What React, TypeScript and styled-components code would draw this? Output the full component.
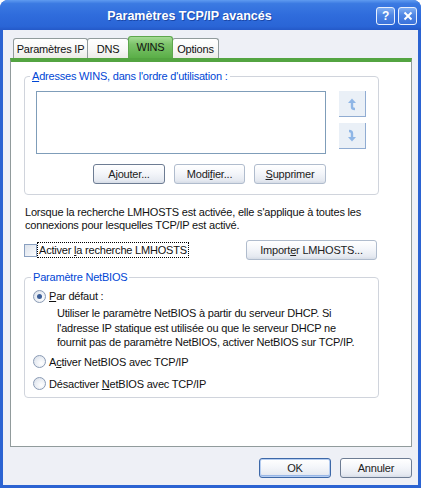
import React from "react";
import styled, { createGlobalStyle, css } from "styled-components";

const Global = createGlobalStyle`
  html, body { margin: 0; padding: 0; background: #ffffff; }
  body { font-family: "Liberation Sans", Arial, sans-serif; font-size: 11px; letter-spacing: -0.2px; color: #111; }
  * { box-sizing: border-box; }
`;

const Window = styled.div`
  width: 421px;
  height: 488px;
  display: flex;
  flex-direction: column;
  background: #2b63d2;
  border-radius: 8px 8px 0 0;
  overflow: hidden;
`;

const TitleBar = styled.div`
  height: 30px;
  display: flex;
  align-items: center;
  padding: 0 4px 0 3px;
  background: linear-gradient(180deg, #5f9bf0 0%, #3b7ae2 12%, #2f6cdc 50%, #2a65d6 88%, #2459c8 100%);
`;

const Title = styled.div`
  flex: 1;
  text-align: center;
  color: #ffffff;
  font-weight: bold;
  font-size: 12.5px;
  letter-spacing: 0;
  text-shadow: 1px 1px 0 #1a47a8;
  padding-top: 2px;
`;

const CaptionButtons = styled.div`
  display: flex;
  gap: 3px;
  padding-top: 2px;
`;

const CaptionButton = styled.div`
  width: 19px;
  height: 18px;
  border: 1px solid #e9f0fd;
  border-radius: 3px;
  background: linear-gradient(180deg, #80aef2 0%, #4f86e4 45%, #3a72db 100%);
  display: flex;
  align-items: center;
  justify-content: center;
  color: #ffffff;
  font-weight: bold;
  font-size: 12px;
`;

const Client = styled.div`
  flex: 1;
  margin: 0 3px 3px 3px;
  background: #eef0f6;
  padding: 6px 6px 0 7px;
  display: flex;
  flex-direction: column;
`;

const TabStrip = styled.div`
  display: flex;
  align-items: flex-end;
  height: 22px;
  padding-left: 3px;
`;

const Tab = styled.div<{ $active?: boolean; $w: number }>`
  width: ${(p) => p.$w}px;
  height: 20px;
  display: flex;
  align-items: center;
  justify-content: center;
  border: 1px solid #919b9c;
  border-bottom: none;
  border-radius: 3px 3px 0 0;
  background: linear-gradient(180deg, #ffffff 0%, #f7f7f5 60%, #ecebe6 100%);
  margin-right: -1px;
  padding-top: 1px;
  ${(p) =>
    p.$active &&
    css`
      height: 22px;
      position: relative;
      z-index: 1;
      border-color: #5ea74d;
      background: linear-gradient(180deg, #a6dc96 0%, #7cc36a 35%, #5aae47 100%);
      padding-bottom: 3px;
    `}
`;

const Panel = styled.div`
  height: 389px;
  width: 402px;
  background: #ffffff;
  border: 1px solid #919b9c;
  border-top: 4px solid #53a441;
  padding: 8px 0 0 13px;
  display: flex;
  flex-direction: column;
`;

const Group = styled.fieldset<{ $pad: string; $mt?: number }>`
  margin: ${(p) => p.$mt ?? 0}px 0 0 0;
  width: 355px;
  min-width: 0;
  border: 1px solid #d0d4dc;
  border-radius: 4px;
  padding: ${(p) => p.$pad};
`;

const Legend = styled.legend<{ $lm: number }>`
  color: #0046d5;
  padding: 0 2px;
  margin-left: ${(p) => p.$lm}px;
  line-height: 13px;
`;

const Acc = styled.span`
  text-decoration: underline;
  text-underline-offset: 1px;
`;

const WinsGrid = styled.div`
  display: grid;
  grid-template-columns: 290px 27px;
  column-gap: 13px;
  margin-top: 8px;
`;

const ListBox = styled.div`
  height: 63px;
  border: 1px solid #7f9db9;
  background: #ffffff;
`;

const ArrowColumn = styled.div`
  display: flex;
  flex-direction: column;
  gap: 6px;
`;

const ArrowButton = styled.div`
  width: 27px;
  height: 26px;
  background: #eaf0f7;
  border-right: 1px solid #90acd2;
  border-bottom: 1px solid #90acd2;
  display: flex;
  align-items: center;
  justify-content: center;
`;

const ButtonRow = styled.div`
  grid-column: 1;
  display: flex;
  justify-content: flex-end;
  gap: 9px;
  margin-top: 10px;
`;

const Button = styled.div<{ $w: number; $kind?: "strong" | "soft" | "default" }>`
  width: ${(p) => p.$w}px;
  height: 20px;
  border-radius: 3px;
  display: flex;
  align-items: center;
  justify-content: center;
  color: #222;
  background: linear-gradient(180deg, #ffffff 0%, #f4f6fa 45%, #e6eaf1 85%, #d7dde7 100%);
  border: 1px solid ${(p) => (p.$kind === "strong" ? "#6d7c93" : "#b0bccd")};
  ${(p) =>
    p.$kind === "default" &&
    css`
      border-color: #3d68a8;
      box-shadow: inset 0 0 0 1px #b5cdf1, inset 0 -1px 0 1px #97b6e6;
    `}
`;

const Paragraph = styled.p`
  margin: 11px 0 0 1px;
  line-height: 13px;
  width: 360px;
`;

const CheckRow = styled.div`
  display: flex;
  align-items: center;
  justify-content: space-between;
  width: 353px;
  margin-top: 8px;
`;

const CheckLabel = styled.label`
  display: flex;
  align-items: center;
`;

const CheckBox = styled.span`
  width: 13px;
  height: 13px;
  border: 1px solid #8aa0c0;
  background: linear-gradient(135deg, #dde3ec 0%, #eef1f6 60%, #ffffff 100%);
  margin-right: 1px;
`;

const FocusText = styled.span`
  outline: 1px dotted #000;
  outline-offset: 0;
  padding: 1px 1px 0 1px;
  line-height: 13px;
`;

const RadioRow = styled.div<{ $mt: number }>`
  display: flex;
  align-items: center;
  height: 16px;
  margin-top: ${(p) => p.$mt}px;
`;

const Radio = styled.span<{ $checked?: boolean }>`
  width: 13px;
  height: 13px;
  border-radius: 50%;
  border: 1px solid #8a9bb5;
  background: radial-gradient(circle at 65% 65%, #ffffff 0%, #e9edf3 55%, #d4dae4 100%);
  margin-right: 3px;
  display: flex;
  align-items: center;
  justify-content: center;
  &::after {
    content: "";
    display: ${(p) => (p.$checked ? "block" : "none")};
    width: 5px;
    height: 5px;
    border-radius: 50%;
    background: #3d5f98;
  }
`;

const Description = styled.div`
  margin-left: 24px;
  line-height: 14.5px;
  margin-top: 2px;
`;

const Footer = styled.div`
  display: flex;
  justify-content: flex-end;
  gap: 9px;
  margin-top: 11px;
  width: 402px;
`;

const UpArrow = () => (
  <svg width="12" height="14" viewBox="0 0 12 14">
    <path d="M2 6 L6 1.5 L10 6 Z" fill="#8fb6e6" />
    <path d="M6 5 V10 Q6 12 9 12" stroke="#8fb6e6" strokeWidth="2.4" fill="none" />
  </svg>
);

const DownArrow = () => (
  <svg width="12" height="14" viewBox="0 0 12 14">
    <path d="M3 2 Q6 2 6 4.5 V9" stroke="#8fb6e6" strokeWidth="2.4" fill="none" />
    <path d="M2 8 L6 12.5 L10 8 Z" fill="#8fb6e6" />
  </svg>
);

export default function App() {
  return (
    <>
      <Global />
      <Window>
        <TitleBar>
          <Title>Paramètres TCP/IP avancés</Title>
          <CaptionButtons>
            <CaptionButton>?</CaptionButton>
            <CaptionButton>
              <svg width="10" height="10" viewBox="0 0 10 10">
                <path d="M1.5 1.5 L8.5 8.5 M8.5 1.5 L1.5 8.5" stroke="#ffffff" strokeWidth="2" />
              </svg>
            </CaptionButton>
          </CaptionButtons>
        </TitleBar>
        <Client>
          <TabStrip>
            <Tab $w={75}>Paramètres IP</Tab>
            <Tab $w={42}>DNS</Tab>
            <Tab $w={45} $active>WINS</Tab>
            <Tab $w={47}>Options</Tab>
          </TabStrip>
          <Panel>
            <Group $pad="0 11px 10px 11px">
              <Legend $lm={-6}>
                <Acc>A</Acc>dresses WINS, dans l'ordre d'utilisation :
              </Legend>
              <WinsGrid>
                <ListBox />
                <ArrowColumn>
                  <ArrowButton>
                    <UpArrow />
                  </ArrowButton>
                  <ArrowButton>
                    <DownArrow />
                  </ArrowButton>
                </ArrowColumn>
                <ButtonRow>
                  <Button $w={72} $kind="strong">
                    A<Acc>j</Acc>outer...
                  </Button>
                  <Button $w={71} $kind="soft">
                    Modi<Acc>f</Acc>ier...
                  </Button>
                  <Button $w={72} $kind="soft">
                    <Acc>S</Acc>upprimer
                  </Button>
                </ButtonRow>
              </WinsGrid>
            </Group>
            <Paragraph>
              Lorsque la recherche LMHOSTS est activée, elle s'applique à toutes les
              <br />
              connexions pour lesquelles TCP/IP est activé.
            </Paragraph>
            <CheckRow>
              <CheckLabel>
                <CheckBox />
                <FocusText>
                  Activer <Acc>l</Acc>a recherche LMHOSTS
                </FocusText>
              </CheckLabel>
              <Button $w={131} $kind="soft">
                Import<Acc>e</Acc>r LMHOSTS...
              </Button>
            </CheckRow>
            <Group $pad="0 8px 5px 8px" $mt={11}>
              <Legend $lm={-2}>Paramètre NetBIOS</Legend>
              <RadioRow $mt={4}>
                <Radio $checked />
                <span>
                  <Acc>P</Acc>ar défaut :
                </span>
              </RadioRow>
              <Description>
                Utiliser le paramètre NetBIOS à partir du serveur DHCP. Si
                <br />
                l'adresse IP statique est utilisée ou que le serveur DHCP ne
                <br />
                fournit pas de paramètre NetBIOS, activer NetBIOS sur TCP/IP.
              </Description>
              <RadioRow $mt={4}>
                <Radio />
                <span>
                  A<Acc>c</Acc>tiver NetBIOS avec TCP/IP
                </span>
              </RadioRow>
              <RadioRow $mt={6}>
                <Radio />
                <span>
                  Désactiver <Acc>N</Acc>etBIOS avec TCP/IP
                </span>
              </RadioRow>
            </Group>
          </Panel>
          <Footer>
            <Button $w={72} $kind="default">
              OK
            </Button>
            <Button $w={72} $kind="strong">
              Annuler
            </Button>
          </Footer>
        </Client>
      </Window>
    </>
  );
}
